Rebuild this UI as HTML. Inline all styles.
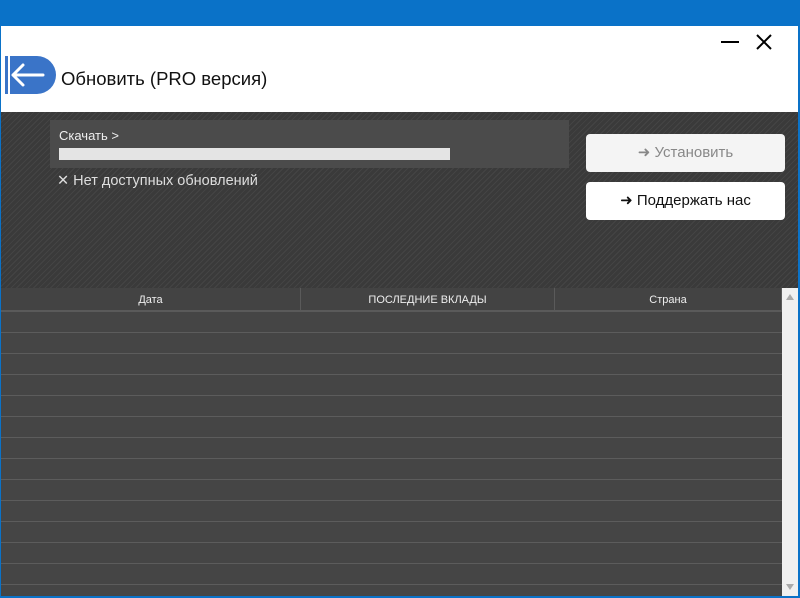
<!DOCTYPE html>
<html><head><meta charset="utf-8"><style>
*{margin:0;padding:0;box-sizing:border-box}
body{width:800px;height:598px;overflow:hidden;background:#0a72c8;font-family:"Liberation Sans","DejaVu Sans",sans-serif;position:relative}
.win{position:absolute;left:1px;top:26px;width:797px;height:570px;background:#fff}
.dark{position:absolute;left:0;top:86px;width:797px;height:484px;background-color:#3a3a3a;background-image:repeating-linear-gradient(135deg,#3a3a3a 0 3px,#444 3px 4px)}
.title{position:absolute;left:60px;top:42px;font-size:18.5px;color:#111}
.back{position:absolute;left:4px;top:30px;width:51px;height:38px;background:#3a74c8;border-radius:0 19px 19px 0}
.back:before{content:"";position:absolute;left:0;top:0;width:2px;height:38px;background:#fff;left:3px}
.panel{position:absolute;left:49px;top:8px;width:519px;height:48px;background:#4b4b4b}
.btn{position:absolute;left:585px;width:199px;height:38px;border-radius:4px;font-size:15px;text-align:center;line-height:38px}
.hdr{position:absolute;left:0;top:176px;width:781px;height:24px;background:#434343;border-bottom:2px solid #5a5a5a;color:#eee;font-size:11px}
.hdr div{position:absolute;top:0;height:24px;line-height:24px;text-align:center;border-right:1px solid #5a5a5a}
.rows{position:absolute;left:0;top:200px;width:781px;height:284px;background:#454545;background-image:repeating-linear-gradient(180deg,transparent 0 20px,#5c5c5c 20px 21px)}
.sb{position:absolute;left:781px;top:176px;width:16px;height:308px;background:#f0f0f0}
</style></head><body>
<div class="win">
<div class="back"><svg width="51" height="38" style="position:absolute;left:0;top:0"><path d="M8 19H38M8 19L18 9M8 19L18 29" stroke="#fff" stroke-width="3" fill="none" stroke-linecap="round"/></svg></div>
<div class="title">Обновить (PRO версия)</div>
<svg style="position:absolute;left:718px;top:6px" width="60" height="20"><path d="M2 10H20" stroke="#000" stroke-width="2"/><path d="M38 3L52 17M52 3L38 17" stroke="#000" stroke-width="2"/></svg>
<div class="dark">
<div class="panel"><div style="position:absolute;left:9px;top:8px;color:#eee;font-size:13px">Скачать &gt;</div><div style="position:absolute;left:9px;top:28px;width:391px;height:12px;background:#e4e4e4"></div></div>
<div style="position:absolute;left:56px;top:61px;color:#ddd;font-size:14.5px">✕ Нет доступных обновлений</div>
<div class="btn" style="top:22px;background:#f4f4f4;color:#888">➜ Установить</div>
<div class="btn" style="top:70px;background:#fff;color:#111">➜ Поддержать нас</div>
<div class="hdr"><div style="left:0;width:300px">Дата</div><div style="left:300px;width:254px">ПОСЛЕДНИЕ ВКЛАДЫ</div><div style="left:554px;width:227px">Страна</div></div>
<div class="rows"></div>
<div class="sb"><div style="position:absolute;left:4px;top:6px;border:4px solid transparent;border-bottom:6px solid #aaa;border-top:0"></div><div style="position:absolute;left:4px;bottom:6px;border:4px solid transparent;border-top:6px solid #aaa;border-bottom:0"></div></div>
</div>
</div>
</body></html>
